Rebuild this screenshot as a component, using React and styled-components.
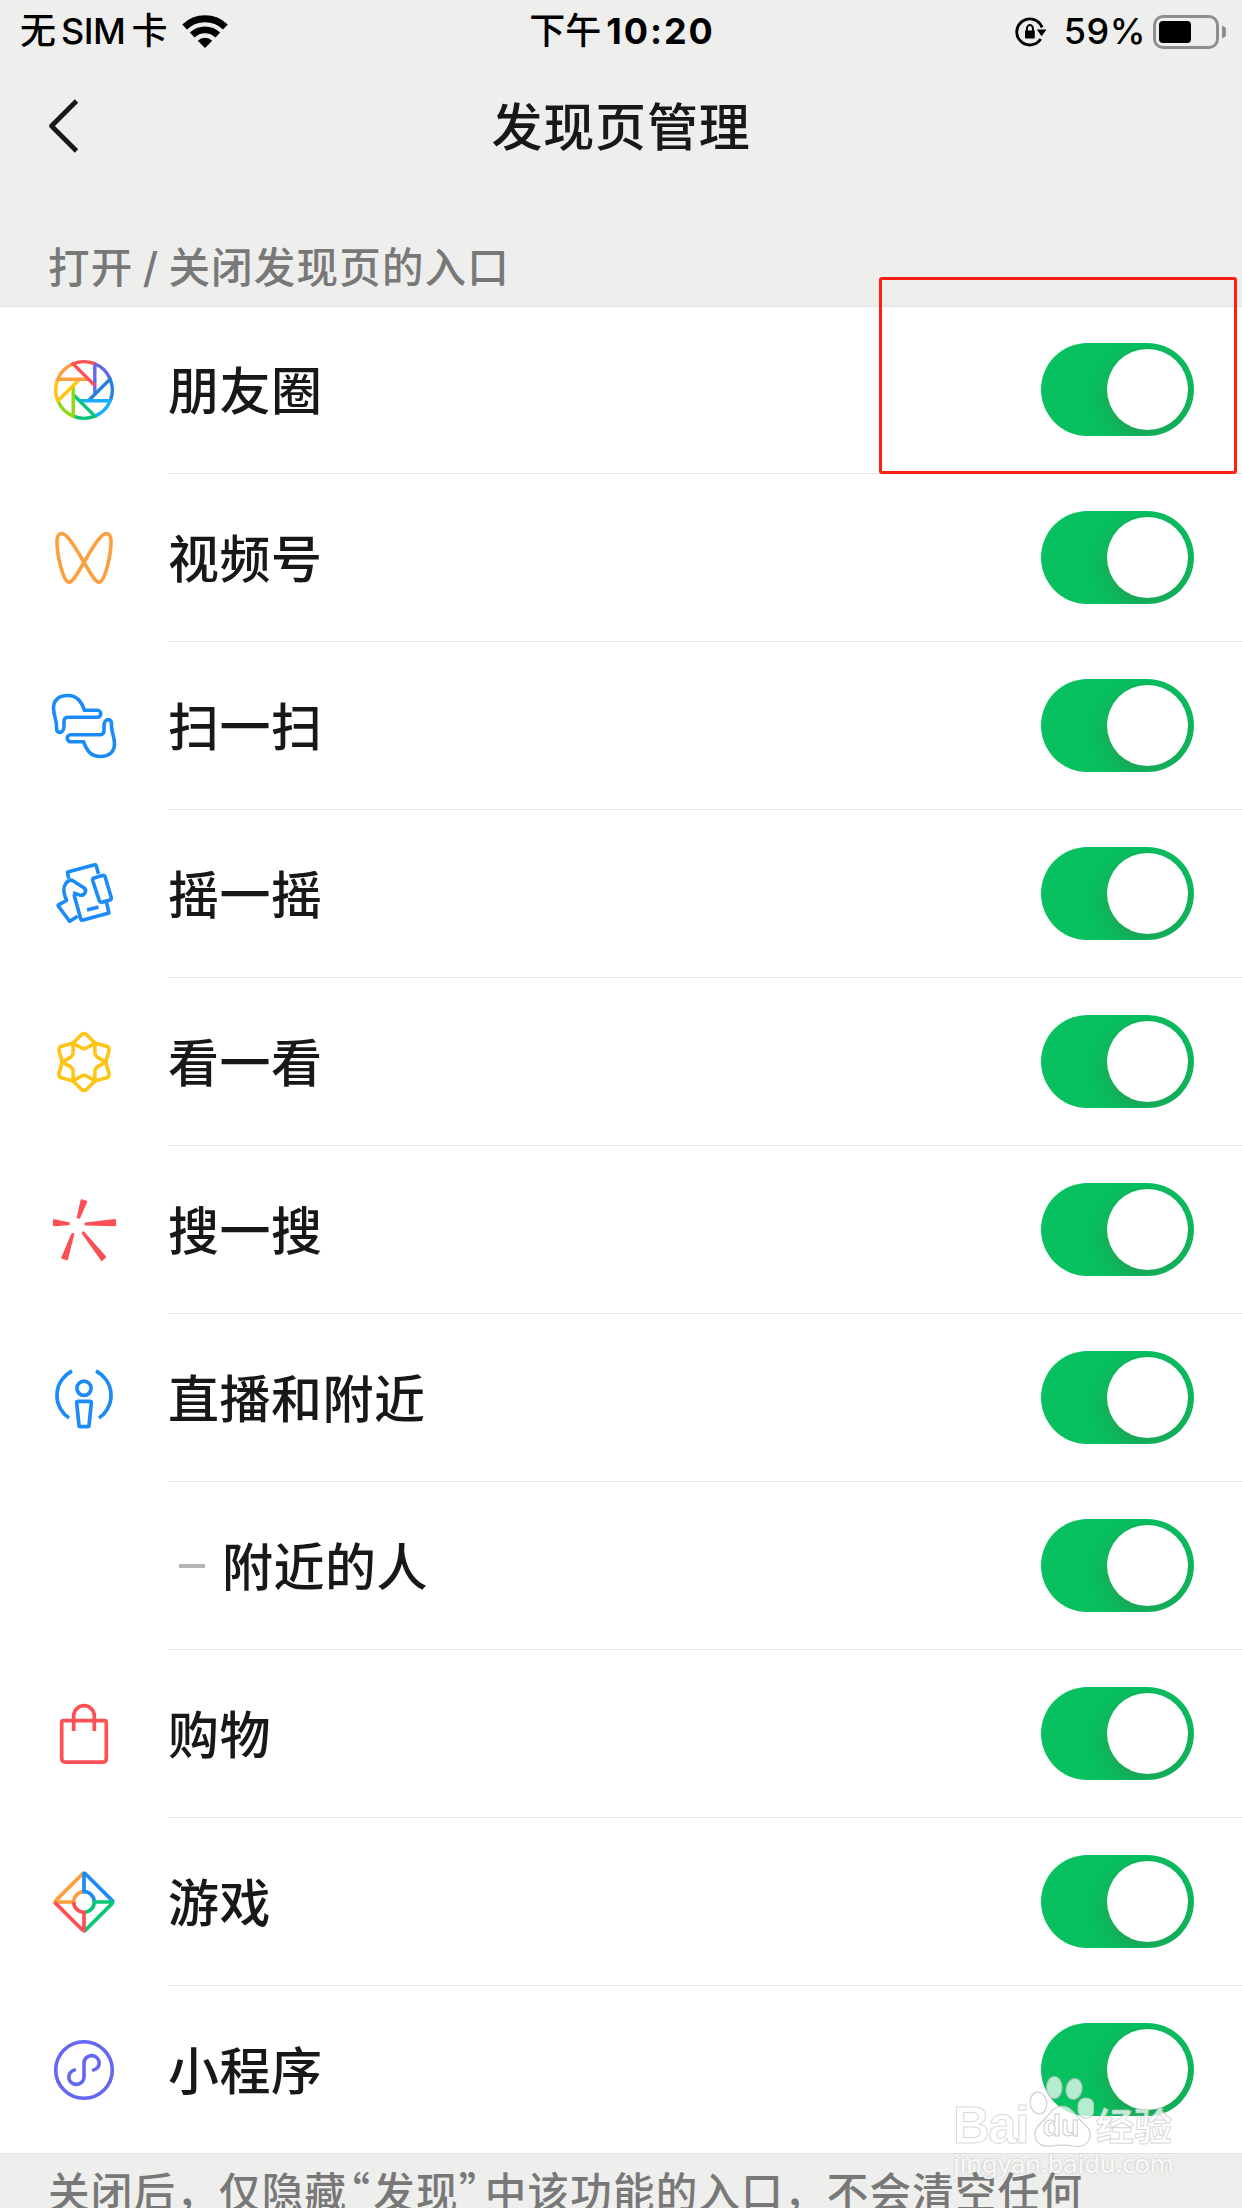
import { useState } from "react";
import styled, { createGlobalStyle } from "styled-components";

const blades = ["#6467f0", "#2782d7", "#1aadff", "#07c777", "#91d713", "#ffc413", "#fd9f3c", "#fb5154"];
const gameColors = ["#fd9f3c", "#1b8bf7", "#07c777", "#fb5154"];
const angles = [0, 60, 120, 180, 240, 300];

const MomentsIcon = () => (
    <Icon viewBox="-36 -36 72 72">
        {blades.map((color, i) => (
            <path key={color} stroke={color} strokeWidth="3.4" transform={`rotate(${i * 45})`} d="M10.8 4.5V-26.2A28.3 28.3 0 0 1 26.1-10.9" />
        ))}
    </Icon>
);

const ChannelsIcon = () => (
    <Icon viewBox="0 0 72 72" stroke="#fd9f3c">
        <path d="M36 40.3C30 30 20 11.5 13.6 11.5C10 11.5 9 15 9 20C9 33 15.2 60.2 21 60.2C25.2 60.2 30 50.3 36 40.3C42 30 52 11.5 58.4 11.5C62 11.5 63 15 63 20C63 33 56.8 60.2 51 60.2C46.8 60.2 42 50.3 36 40.3Z" />
    </Icon>
);

const hand = "M36.5 20.3H49.3a3.4 3.4 0 0 1 0 6.9H20.5c-3 0-4.5 1.2-4.5 4v5c0 3.5-1.9 6.2-4.3 6.2-2.3 0-3.2-1.6-3.1-4.2.3-8-3.1-12.4-3.1-20.2C5.5 10.2 11 5.5 19.5 5.5c9.5 0 13.5 5.3 17 14.8z";

const ScanIcon = () => (
    <Icon viewBox="0 0 72 72" stroke="#1b8bf7">
        <path d={hand} />
        <path d={hand} transform="rotate(180 36 36)" />
    </Icon>
);

const ShakeIcon = () => (
    <Icon viewBox="0 0 72 72" stroke="#1b8bf7" strokeLinejoin="round">
        <path d="M20.8 20.5L19.6 15.2Q19.3 14 20.5 13.7L46.8 6.8Q47.8 6.5 48.1 7.5L50.5 16" />
        <path d="M58.5 44.5L60.8 54Q61 55 60 55.3L34.3 62.2Q33.2 62.5 32.9 61.5L26 36.5" />
        <path d="M46 20L54.5 17.5Q56.6 17 57.2 19L63.2 39.5Q63.7 41.5 61.8 42L54 44.2Q52 44.7 51.3 42.7L44.7 22.5Q44.3 20.6 46 20Z" />
        <path d="M29.7 58.2L21.7 63.3L10.3 48Q9.8 47.3 10.5 46.9L18.6 42.5C15.5 35.5 15 29.5 17.5 26C19 23.8 21.5 21.5 24 22.3L35.5 29.5C39.8 32.5 36.5 37.5 32.5 37.2C29.5 36.8 27.5 35.3 25 34.8" />
        <path d="M39 52L50.5 49" />
    </Icon>
);

const LookIcon = () => (
    <Icon viewBox="-36 -36 72 72" stroke="#ffc413">
        {angles.map((a) => (
            <path key={a} transform={`rotate(${a})`} d="M-10.9-18.9L-2.5-27.4Q0-29.6 2.5-27.4L10.9-18.9L2.5-14Q0-12.8-2.5-14Z" />
        ))}
    </Icon>
);

const SearchIcon = () => (
    <Icon viewBox="0 0 72 72" stroke="#fb5154">
        <g fill="#fb5154" strokeWidth="2" strokeLinejoin="round">
            <path d="M33.5 6.2L38.3 7.7L31.2 23.8L29.8 23.4Z" />
            <path d="M5.9 26.2L20.8 29.2V30.3L5.9 31.2Z" />
            <path d="M67 26L37.5 29.4V30.5L67 31.2Z" />
            <path d="M24.3 40L25.3 40.3L19 65.3L14.2 63.9Z" />
            <path d="M34.6 39L35.5 38.4L57.2 63L53.7 66Z" />
        </g>
    </Icon>
);

const NearbyIcon = () => (
    <Icon viewBox="0 0 72 72" stroke="#1b8bf7" strokeWidth="3.7">
        <circle cx="36" cy="26.3" r="7.1" />
        <path strokeLinejoin="round" d="M30 39.3H42Q43.5 39.3 43.3 41L41 63.5Q40.9 64.6 39.7 64.6H32.3Q31.1 64.6 31 63.5L28.7 41Q28.5 39.3 30 39.3Z" />
        <path d="M24 9A27.3 27.3 0 0 0 21 56M48 9A27.3 27.3 0 0 1 51 56" />
    </Icon>
);

const BagIcon = () => (
    <Icon viewBox="0 0 72 72" stroke="#fb5154" strokeWidth="3.7">
        <path d="M15.2 22.6H56.8Q58.3 22.6 58.3 24.2V60.5Q58.3 64.2 54.6 64.2H17.4Q13.7 64.2 13.7 60.5V24.2Q13.7 22.6 15.2 22.6Z" />
        <path d="M25.7 33V18A10.3 10.3 0 0 1 46.3 18V33" />
    </Icon>
);

const GameIcon = () => (
    <Icon viewBox="-36 -36 72 72" strokeWidth="3.7">
        {gameColors.map((color, i) => (
            <path key={color} stroke={color} transform={`rotate(${i * 90})`} d="M0-29.2Q-.7-29-1.6-28L-28-1.6Q-29.5 0-27.5 0H-10.3A10.3 10.3 0 0 1 0-10.3" />
        ))}
    </Icon>
);

const MiniProgramIcon = () => (
    <Icon viewBox="0 0 72 72" stroke="#6467f0">
        <circle cx="36" cy="36" r="28.3" />
        <path strokeLinecap="round" d="M45.5 36A7.6 7.3 0 1 0 36 29V43A7.6 7.3 0 1 1 26.5 36" />
    </Icon>
);

const entries = [
    { name: "朋友圈", icon: MomentsIcon },
    { name: "视频号", icon: ChannelsIcon },
    { name: "扫一扫", icon: ScanIcon },
    { name: "摇一摇", icon: ShakeIcon },
    { name: "看一看", icon: LookIcon },
    { name: "搜一搜", icon: SearchIcon },
    { name: "直播和附近", icon: NearbyIcon },
    { name: "附近的人", sub: true },
    { name: "购物", icon: BagIcon },
    { name: "游戏", icon: GameIcon },
    { name: "小程序", icon: MiniProgramIcon },
];

const StatusBar = () => (
    <Status>
        <StatusSide>
            <Carrier>无<Sim>SIM</Sim>卡</Carrier>
            <svg width="48" height="36" viewBox="0 0 48 36" fill="none" stroke="#000" strokeWidth="6.8">
                <path d="M3.6 13A29.3 29.3 0 0 1 44.4 13M11.2 21A18.4 18.4 0 0 1 36.8 21" />
                <path fill="#000" stroke="none" d="M24 34L16.8 26.8A10.3 10.3 0 0 1 31.2 26.8Z" />
            </svg>
        </StatusSide>
        <Time>下午<b>10:20</b></Time>
        <StatusSide $end>
            <svg width="34" height="32" viewBox="0 0 34 32" fill="none" stroke="#000" strokeWidth="2.9">
                <path d="M26.7 23A13 13 0 1 1 28 11.5" />
                <path fill="#000" stroke="none" d="M22.8 13.5H32.5L27.6 20.3ZM11 14.5H20.8V21.5Q20.8 22.5 19.8 22.5H12Q11 22.5 11 21.5Z" />
                <path strokeWidth="2" d="M12.9 15V12.5A3 3.4 0 0 1 18.9 12.5V15" />
            </svg>
            <Percent>59%</Percent>
            <Battery><Charge /></Battery>
            <BatteryTip />
        </StatusSide>
    </Status>
);

const App = () => {
    const [hidden, setHidden] = useState([]);

    const toggle = (name) => {
        setHidden(hidden.includes(name) ? hidden.filter((n) => n !== name) : [...hidden, name]);
    };

    return (
        <Wrapper lang="zh-CN">
            <GlobalStyle />
            <StatusBar />
            <NavBar>
                <svg width="40" height="60" viewBox="0 0 40 60" fill="none" stroke="#181818" strokeWidth="4.8">
                    <path strokeLinejoin="round" d="M29.5 5L4.5 30L29.5 55" />
                </svg>
                <Title>发现页管理</Title>
            </NavBar>
            <SectionTitle>打开<Slash>/</Slash>关闭发现页的入口</SectionTitle>
            <List>
                {entries.map(({ name, icon: EntryIcon, sub }) => (
                    <Row key={name}>
                        <IconCell>{EntryIcon && <EntryIcon />}</IconCell>
                        <Content>
                            {sub && <Dash />}
                            <Label>{name}</Label>
                            <Switch $on={!hidden.includes(name)} onClick={() => toggle(name)}>
                                <Knob />
                            </Switch>
                        </Content>
                    </Row>
                ))}
            </List>
            <Note>关闭后，仅隐藏<Quote $open>“</Quote>发现<Quote>”</Quote>中该功能的入口，不会清空任何</Note>
            <Highlight />
            <Watermark>
                <Brand>
                    <Bai>Bai</Bai>
                    <Paw>
                        <svg width="66" height="74" viewBox="0 0 66 74" fill="#fff" fillOpacity=".7" stroke="#bbb" strokeOpacity=".7" strokeWidth="1.2">
                            <ellipse cx="10.5" cy="30" rx="8.3" ry="11" transform="rotate(-8 10.5 30)" />
                            <ellipse cx="26.3" cy="14.5" rx="7.8" ry="11" />
                            <ellipse cx="46" cy="16" rx="8" ry="10.5" transform="rotate(12 46 16)" />
                            <rect x="50" y="25" width="16" height="20" rx="7.5" />
                            <path d="M34 33C26 33 23 39 18 45C12 51 6 55 7 63C8 71 15 74 23 73C30 72 39 72 46 73C54 75 61 71 62 63C63 55 57 52 52 47C46 40 43 33 34 33Z" />
                        </svg>
                        <Du>du</Du>
                    </Paw>
                    <Jingyan>经验</Jingyan>
                </Brand>
                <Site>jingyan.baidu.com</Site>
            </Watermark>
        </Wrapper>
    );
};

export default App;

const GlobalStyle = createGlobalStyle`
    body {
        margin: 0;
        background: #eeeeec;
    }
    * {
        box-sizing: border-box;
    }
`;

const Wrapper = styled.div`
    position: relative;
    width: 1242px;
    height: 2208px;
    overflow: hidden;
    background: #eeeeec;
    color: #181818;
    font-family: Inter, "Noto Sans CJK SC", sans-serif;
`;

const Status = styled.div`
    height: 62px;
    padding: 0 16px 0 20px;
    display: grid;
    grid-template-columns: 1fr auto 1fr;
    align-items: center;
    color: #000;
    font-size: 36px;
    font-weight: 500;
    line-height: 63px;
`;

const StatusSide = styled.div`
    display: flex;
    align-items: center;
    justify-content: ${(props) => (props.$end ? "flex-end" : "flex-start")};
`;

const Carrier = styled.span`
    margin-right: 14px;
`;

const Sim = styled.span`
    margin: 0 6px 0 5px;
    letter-spacing: -0.5px;
`;

const Time = styled.div`
    padding-right: 2px;

    b {
        margin-left: 5px;
        font-weight: 700;
        letter-spacing: 1.9px;
    }
`;

const Percent = styled.span`
    margin: 0 7px 0 16px;
    letter-spacing: 0.5px;
`;

const Battery = styled.div`
    width: 66px;
    height: 34px;
    padding: 3px;
    border: 3px solid #8e8e8e;
    border-radius: 10px;
`;

const Charge = styled.div`
    width: 32px;
    height: 22px;
    border-radius: 4px;
    background: #000;
`;

const BatteryTip = styled.div`
    width: 4px;
    height: 12px;
    margin-left: 3px;
    border-radius: 0 4px 4px 0;
    background: #8e8e8e;
`;

const NavBar = styled.div`
    height: 127px;
    padding: 0 47px;
    display: grid;
    grid-template-columns: 1fr auto 1fr;
    align-items: center;
`;

const Title = styled.h1`
    margin: 0;
    padding-bottom: 3px;
    font-size: 51px;
    font-weight: 500;
    letter-spacing: 0.8px;
`;

const SectionTitle = styled.div`
    height: 117px;
    padding: 49px 48px 0;
    color: #787878;
    font-size: 41.5px;
    font-weight: 500;
    line-height: 60px;
    letter-spacing: 1.2px;
`;

const Slash = styled.span`
    display: inline-block;
    width: 35px;
    text-align: center;
`;

const List = styled.div`
    background: #fff;
    box-shadow: inset 0 1px #e2e2e2;
`;

const Row = styled.div`
    height: 168px;
    display: flex;

    &:last-child {
        border-bottom: 1px solid #e2e2e2;
    }
    &:not(:last-child) > :last-child {
        border-bottom: 1px solid #e2e2e2;
    }
`;

const IconCell = styled.div`
    width: 168px;
    padding: 48px;
`;

const Icon = styled.svg.attrs((props) => ({ fill: "none", strokeWidth: props.strokeWidth || 3.6 }))`
    display: block;
    width: 72px;
    height: 72px;
`;

const Content = styled.div`
    flex: 1;
    padding-right: 48px;
    display: flex;
    align-items: center;
`;

const Dash = styled.div`
    width: 26px;
    height: 4px;
    margin: 0 17px 0 11px;
    background: #b5b5b5;
`;

const Label = styled.div`
    flex: 1;
    padding-bottom: 3px;
    font-size: 51px;
    font-weight: 500;
    letter-spacing: 0.5px;
`;

const Switch = styled.button`
    width: 153px;
    height: 93px;
    padding: 6px;
    border: none;
    border-radius: 47px;
    display: flex;
    overflow: hidden;
    justify-content: ${(props) => (props.$on ? "flex-end" : "flex-start")};
    background: ${(props) => (props.$on ? "#07c160" : "#e5e5e5")};
`;

const Knob = styled.div`
    width: 81px;
    height: 81px;
    border-radius: 50%;
    background: #fff;
    box-shadow: 0 8px 24px rgba(90, 80, 60, 0.3);
`;

const Note = styled.div`
    padding: 9px 0 0 48px;
    color: #787878;
    font-size: 41.5px;
    font-weight: 500;
    line-height: 60px;
    letter-spacing: 1.25px;
    white-space: nowrap;
`;

const Quote = styled.span`
    display: inline-flex;
    width: 26px;
    padding-right: ${(props) => (props.$open ? "2px" : "0")};
    justify-content: ${(props) => (props.$open ? "flex-end" : "flex-start")};
    font-family: "Noto Sans CJK SC", sans-serif;
    line-height: 1;
`;

const Highlight = styled.div`
    position: absolute;
    left: 879px;
    top: 277px;
    width: 358px;
    height: 197px;
    border: 3px solid #ff2012;
    border-radius: 3px;
`;

const Watermark = styled.div`
    position: absolute;
    left: 953px;
    top: 2071px;
    color: rgba(255, 255, 255, 0.75);
    -webkit-text-stroke: 1px rgba(190, 190, 190, 0.6);
    pointer-events: none;
`;

const Brand = styled.div`
    height: 76px;
    display: flex;
    align-items: flex-end;
    font-weight: 700;
`;

const Bai = styled.span`
    width: 75px;
    font: 700 51px/42px "Liberation Sans", Arial, sans-serif;
    letter-spacing: -1.5px;
`;

const Paw = styled.div`
    display: grid;
    place-items: end center;
    height: 75px;

    > * {
        grid-area: 1 / 1;
    }
`;

const Du = styled.span`
    padding-bottom: 4px;
    font: 700 30px/34px "Liberation Sans", Arial, sans-serif;
    -webkit-text-stroke: 1px rgba(190, 190, 190, 0.8);
`;

const Jingyan = styled.span`
    margin-left: 2px;
    font-size: 38px;
    line-height: 42px;
`;

const Site = styled.div`
    color: rgba(255, 255, 255, 0.9);
    font: 500 26px/33px "Noto Sans", sans-serif;
    letter-spacing: -0.5px;
    -webkit-text-stroke: 0;
    text-shadow: 0 0 2px rgba(0, 0, 0, 0.25);
`;
